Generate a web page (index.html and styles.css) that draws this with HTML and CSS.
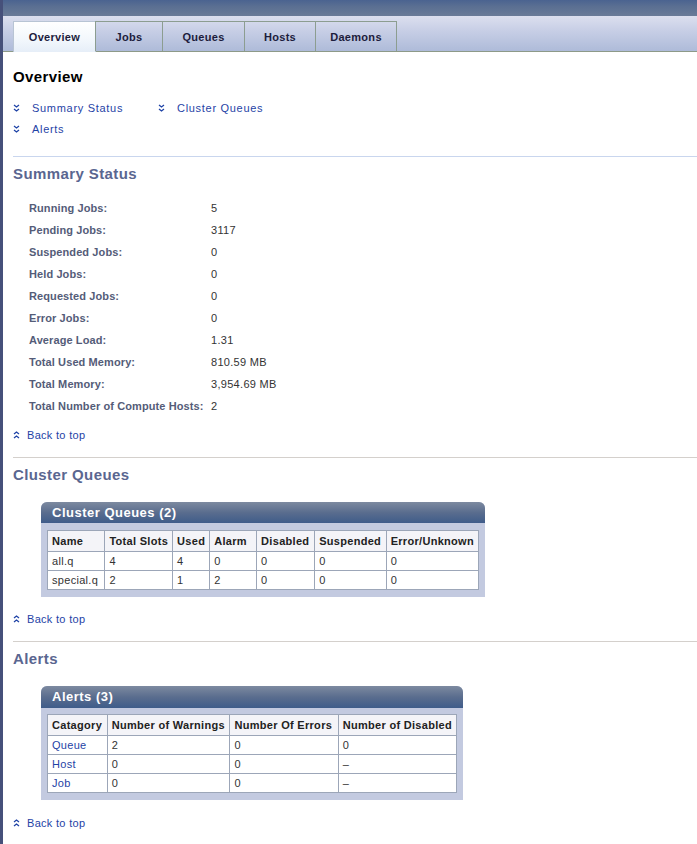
FILE: index.html
```html
<!DOCTYPE html>
<html>
<head>
<meta charset="utf-8">
<title>Overview</title>
<link rel="stylesheet" href="styles.css">
</head>
<body>
<div class="page">
  <div class="masthead"></div>
  <div class="tabstrip">
    <div class="tab active">Overview</div>
    <div class="tab w-jobs">Jobs</div>
    <div class="tab w-queues">Queues</div>
    <div class="tab w-hosts">Hosts</div>
    <div class="tab w-daemons">Daemons</div>
  </div>

  <div class="content">
    <h1 class="title">Overview</h1>
    <div class="jumplinks">
      <div class="jumprow">
        <a class="jump w-first" href="#summary"><svg class="ico" viewBox="0 0 7 8" width="7" height="8"><polyline points="1,1 3.5,3 6,1" /><polyline points="1,5 3.5,7 6,5" /></svg><span>Summary Status</span></a>
        <a class="jump" href="#queues"><svg class="ico" viewBox="0 0 7 8" width="7" height="8"><polyline points="1,1 3.5,3 6,1" /><polyline points="1,5 3.5,7 6,5" /></svg><span>Cluster Queues</span></a>
      </div>
      <div class="jumprow">
        <a class="jump" href="#alerts"><svg class="ico" viewBox="0 0 7 8" width="7" height="8"><polyline points="1,1 3.5,3 6,1" /><polyline points="1,5 3.5,7 6,5" /></svg><span>Alerts</span></a>
      </div>
    </div>

    <hr class="sep blue">
    <h2 class="section" id="summary">Summary Status</h2>
    <div class="props">
      <div class="prop"><span class="lbl">Running Jobs:</span><span class="val">5</span></div>
      <div class="prop"><span class="lbl">Pending Jobs:</span><span class="val">3117</span></div>
      <div class="prop"><span class="lbl">Suspended Jobs:</span><span class="val">0</span></div>
      <div class="prop"><span class="lbl">Held Jobs:</span><span class="val">0</span></div>
      <div class="prop"><span class="lbl">Requested Jobs:</span><span class="val">0</span></div>
      <div class="prop"><span class="lbl">Error Jobs:</span><span class="val">0</span></div>
      <div class="prop"><span class="lbl">Average Load:</span><span class="val">1.31</span></div>
      <div class="prop"><span class="lbl">Total Used Memory:</span><span class="val">810.59 MB</span></div>
      <div class="prop"><span class="lbl">Total Memory:</span><span class="val">3,954.69 MB</span></div>
      <div class="prop"><span class="lbl">Total Number of Compute Hosts:</span><span class="val">2</span></div>
    </div>
    <a class="top top-a" href="#"><svg class="ico" viewBox="0 0 7 8" width="7" height="8"><polyline points="1,3 3.5,1 6,3" /><polyline points="1,7 3.5,5 6,7" /></svg><span>Back to top</span></a>

    <hr class="sep grey">
    <h2 class="section" id="queues">Cluster Queues</h2>
    <div class="box box-queues">
      <div class="boxhead">Cluster Queues (2)</div>
      <div class="boxbody">
        <table class="grid">
          <tr class="hdr"><th class="c1">Name</th><th class="c2">Total Slots</th><th class="c3">Used</th><th class="c4">Alarm</th><th class="c5">Disabled</th><th class="c6">Suspended</th><th class="c7">Error/Unknown</th></tr>
          <tr><td>all.q</td><td>4</td><td>4</td><td>0</td><td>0</td><td>0</td><td>0</td></tr>
          <tr><td>special.q</td><td>2</td><td>1</td><td>2</td><td>0</td><td>0</td><td>0</td></tr>
        </table>
      </div>
    </div>
    <a class="top top-b" href="#"><svg class="ico" viewBox="0 0 7 8" width="7" height="8"><polyline points="1,3 3.5,1 6,3" /><polyline points="1,7 3.5,5 6,7" /></svg><span>Back to top</span></a>

    <hr class="sep grey">
    <h2 class="section" id="alerts">Alerts</h2>
    <div class="box box-alerts">
      <div class="boxhead">Alerts (3)</div>
      <div class="boxbody">
        <table class="grid">
          <tr class="hdr"><th class="a1">Catagory</th><th class="a2">Number of Warnings</th><th class="a3">Number Of Errors</th><th class="a4">Number of Disabled</th></tr>
          <tr><td><a href="#">Queue</a></td><td>2</td><td>0</td><td>0</td></tr>
          <tr><td><a href="#">Host</a></td><td>0</td><td>0</td><td>&ndash;</td></tr>
          <tr><td><a href="#">Job</a></td><td>0</td><td>0</td><td>&ndash;</td></tr>
        </table>
      </div>
    </div>
    <a class="top top-c" href="#"><svg class="ico" viewBox="0 0 7 8" width="7" height="8"><polyline points="1,3 3.5,1 6,3" /><polyline points="1,7 3.5,5 6,7" /></svg><span>Back to top</span></a>
  </div>
</div>
</body>
</html>
```

FILE: styles.css
```css
html, body {
  margin: 0;
  padding: 0;
  background: #ffffff;
}

body {
  font-family: "Liberation Sans", Arial, sans-serif;
  font-size: 11px;
  color: #333333;
}

.page {
  border-left: 3px solid #46507a;
  min-height: 844px;
  box-sizing: border-box;
}

.masthead {
  height: 16px;
  background: linear-gradient(#4a6390, #5a6f92 40%, #6a7b97);
}

.tabstrip {
  height: 30px;
  padding: 5px 0 0 10px;
  display: flex;
  align-items: flex-end;
  background: linear-gradient(#dcdfee, #c8cfe6 40%, #aebbd9);
  border-bottom: 1px solid #8d9a88;
}

.tab {
  box-sizing: border-box;
  height: 30px;
  width: 83px;
  border: 1px solid #8c9d90;
  border-bottom: none;
  margin-right: -1px;
  display: flex;
  align-items: center;
  justify-content: center;
  font-weight: bold;
  font-size: 11px;
  color: #1c1c3c;
  letter-spacing: 0.3px;
}

.tab.active {
  background: linear-gradient(#ffffff, #f2f7fc 60%, #e6eef8);
  border-color: #b8c4d4;
  height: 31px;
  margin-bottom: -1px;
}

.w-jobs { width: 68px; }
.w-queues { width: 83px; }
.w-hosts { width: 72px; }
.w-daemons { width: 82px; }

.content {
  padding-left: 10px;
}

.title {
  margin: 15px 0 0 0;
  font-size: 15px;
  line-height: 20px;
  font-weight: bold;
  color: #000000;
  letter-spacing: 0.4px;
}

.jumplinks {
  margin-top: 10px;
}

.jumprow {
  display: flex;
  height: 21px;
  align-items: center;
}

a {
  color: #1f43a6;
  text-decoration: none;
}

.jump {
  display: flex;
  align-items: center;
  font-size: 11px;
  letter-spacing: 0.7px;
}

.jump .ico {
  margin-right: 12px;
}

.w-first {
  width: 145px;
}

.ico {
  fill: none;
  stroke: #1f43a6;
  stroke-width: 1.3;
  flex: none;
}

.sep {
  border: none;
  height: 1px;
  margin: 0;
}

.sep.blue {
  margin-top: 17px;
  background: #c9d6ee;
}

.sep.grey {
  background: #d4d0cc;
}

.section {
  margin: 7px 0 0 0;
  font-size: 15px;
  line-height: 20px;
  font-weight: bold;
  color: #5a6690;
  letter-spacing: 0.4px;
}

.props {
  margin-top: 13px;
  padding-left: 16px;
}

.prop {
  display: flex;
  height: 22px;
  align-items: center;
}

.lbl {
  width: 182px;
  font-weight: bold;
  color: #545c78;
  letter-spacing: 0.1px;
}

.val {
  color: #333333;
  letter-spacing: 0.3px;
}

.top {
  display: flex;
  align-items: center;
  height: 20px;
  letter-spacing: 0.3px;
  width: max-content;
}

.top .ico {
  margin-right: 7px;
}

.top-a { margin-top: 8px; margin-bottom: 12px; }
.top-b { margin-top: 12px; margin-bottom: 12px; }
.top-c { margin-top: 13px; }

.box {
  margin: 17px 0 0 28px;
  background: #c3cae0;
  border-radius: 6px 6px 0 0;
}

.box-queues { width: 444px; }
.box-alerts { width: 422px; }

.boxhead {
  height: 21px;
  line-height: 22px;
  padding-left: 11px;
  border-radius: 6px 6px 0 0;
  background: linear-gradient(#7d8aa0, #5a6d8e 50%, #3f5c8a);
  color: #ffffff;
  font-weight: bold;
  font-size: 13px;
  letter-spacing: 0.5px;
}

.box-alerts .boxhead {
  height: 22px;
}

.boxbody {
  padding: 7px 6px 7px 6px;
}

.box-alerts .boxbody {
  padding: 6px 6px 7px 6px;
}

.grid {
  border-collapse: collapse;
  width: 100%;
  background: #ffffff;
  font-size: 11px;
}

.grid th,
.grid td {
  border: 1px solid #9ca6b8;
  text-align: left;
  padding: 0 4px;
  white-space: nowrap;
  letter-spacing: 0.3px;
}

.grid th {
  height: 20px;
  background: #f4f4f8;
  color: #222222;
  font-weight: bold;
}

.grid td {
  height: 18px;
  color: #333333;
}

.c1 { width: 51px; }
.c2 { width: 55px; }
.c3 { width: 20px; }
.c4 { width: 44px; }
.c5 { width: 50px; }
.c6 { width: 63px; }

.a1 { width: 51px; }
.a2 { width: 114px; }
.a3 { width: 100px; }
```
